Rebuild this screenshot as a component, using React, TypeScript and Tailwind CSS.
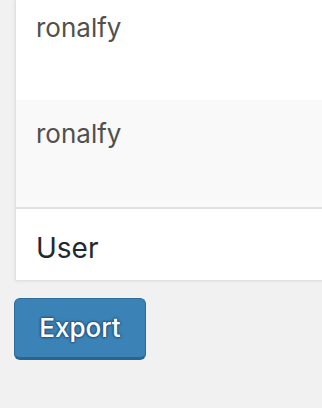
import React from "react";

export default function App() {
  return (
    <div
      className="w-[322px] h-[408px] bg-[#f1f1f1] overflow-hidden"
      style={{ fontFamily: "Inter, 'Liberation Sans', sans-serif" }}
    >
      <div className="ml-[15px] w-[320px] bg-white border-l border-[#e1e1e1] shadow-[0_1px_3px_rgba(0,0,0,0.1)]">
        <div className="h-[100px] bg-white pl-[20px] pt-[13px]">
          <span className="block text-[26px] leading-[30px] text-[#505050]">ronalfy</span>
        </div>
        <div className="h-[107px] bg-[#f9f9f9] pl-[20px] pt-[19px]">
          <span className="block text-[26px] leading-[30px] text-[#505050]">ronalfy</span>
        </div>
        <div className="h-[73px] border-t-2 border-[#e1e1e1] bg-white pl-[20px] pt-[24px]">
          <span className="block text-[28px] leading-[30px] text-[#23282d]">User</span>
        </div>
      </div>
      <div className="pl-[14px] pt-[18px]">
        <button className="w-[132px] h-[62px] rounded-[6px] bg-[#3b82b6] border border-[#2f6c9c] border-b-[3px] border-b-[#2b6392] text-white text-[26px] font-medium leading-none [text-shadow:0_-1px_2px_#245b86,1px_0_2px_#245b86,0_1px_2px_#245b86,-1px_0_2px_#245b86]">
          Export
        </button>
      </div>
    </div>
  );
}
